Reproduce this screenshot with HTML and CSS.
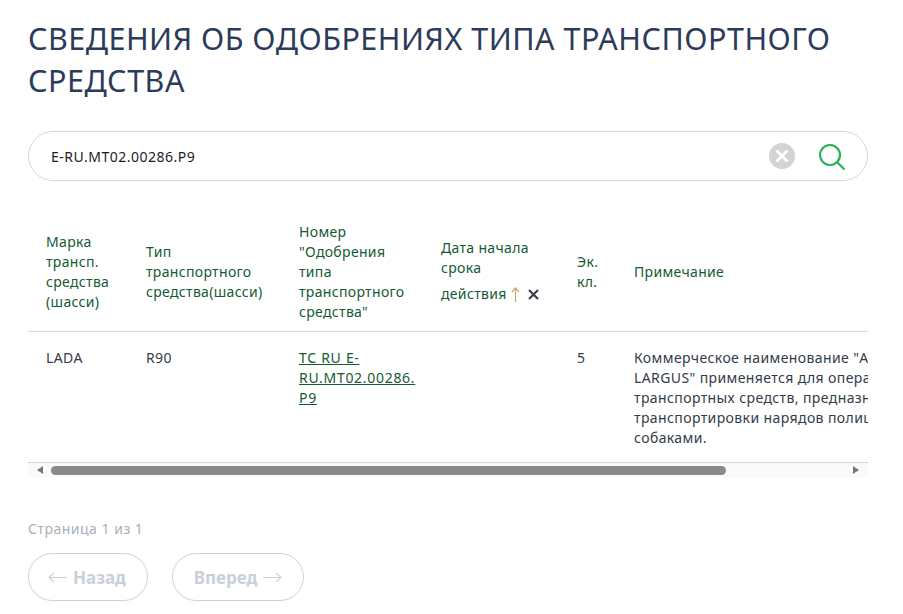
FILE: index.html
```html
<!DOCTYPE html>
<html lang="ru">
<head>
<meta charset="utf-8">
<title>Сведения об одобрениях типа транспортного средства</title>
<link rel="stylesheet" href="styles.css">
</head>
<body>
<main class="page">
  <h1 class="title">Сведения об одобрениях типа транспортного средства</h1>
  <form class="search">
    <span class="search-value">E-RU.MT02.00286.P9</span>
    <svg class="icon-clear" width="26" height="26" viewBox="0 0 26 26" aria-hidden="true">
      <circle cx="13" cy="13" r="13" fill="#d3d3d3"/>
      <path d="M7.5 7.5l11 11M18.5 7.5l-11 11" stroke="#fff" stroke-width="3" fill="none"/>
    </svg>
    <svg class="icon-search" width="26" height="26" viewBox="0 0 26 26" aria-hidden="true">
      <circle cx="11" cy="11" r="10" stroke="#2bb159" stroke-width="2.2" fill="none"/>
      <path d="M18 18l7.5 7.5" stroke="#2bb159" stroke-width="2.2" fill="none"/>
    </svg>
  </form>
  <section class="table-block">
    <div class="table-scroll">
      <table class="results">
        <colgroup>
          <col class="c1"><col class="c2"><col class="c3"><col class="c4"><col class="c5"><col class="c6">
        </colgroup>
        <thead>
          <tr>
            <th>Марка<br>трансп.<br>средства<br>(шасси)</th>
            <th>Тип<br>транспортного<br>средства(шасси)</th>
            <th>Номер<br>"Одобрения<br>типа<br>транспортного<br>средства"</th>
            <th>Дата начала<br>срока<br><span class="sort">действия<svg class="sort-arrow" width="9" height="15" viewBox="0 0 9 15" aria-hidden="true"><path d="M4.5 15V1M1 5l3.5-4L8 5" stroke="#c8a878" stroke-width="1.2" fill="none"/></svg><svg class="sort-x" width="11" height="11" viewBox="0 0 11 11" aria-hidden="true"><path d="M1 1l9 9M10 1L1 10" stroke="#3a3f4a" stroke-width="2.2" fill="none"/></svg></span></th>
            <th>Эк.<br>кл.</th>
            <th>Примечание</th>
          </tr>
        </thead>
        <tbody>
          <tr>
            <td>LADA</td>
            <td>R90</td>
            <td><a href="#">ТС RU E-<br>RU.MT02.00286.<br>P9</a></td>
            <td></td>
            <td>5</td>
            <td>Коммерческое наименование "ATLAS<br>LARGUS" применяется для оперативных<br>транспортных средств, предназначенных для<br>транспортировки нарядов полиции со служебными<br>собаками.</td>
          </tr>
        </tbody>
      </table>
    </div>
    <div class="scrollbar" aria-hidden="true">
      <span class="sb-arrow sb-left"></span>
      <span class="sb-thumb"></span>
      <span class="sb-arrow sb-right"></span>
    </div>
  </section>
  <p class="page-info">Страница 1 из 1</p>
  <nav class="pager">
    <a class="pager-btn prev"><svg width="19" height="11" viewBox="0 0 19 11" aria-hidden="true"><path d="M19 5.5H1M6 1L1 5.5 6 10" stroke="#ccd2dc" stroke-width="1.2" fill="none"/></svg>Назад</a>
    <a class="pager-btn next">Вперед<svg width="19" height="11" viewBox="0 0 19 11" aria-hidden="true"><path d="M0 5.5h18M13 1l5 4.5L13 10" stroke="#ccd2dc" stroke-width="1.2" fill="none"/></svg></a>
  </nav>
</main>
</body>
</html>
```
FILE: styles.css
```css
* { box-sizing: border-box; }
html, body { margin: 0; background: #fff; }
body { font-family: "Noto Sans", "Open Sans", sans-serif; color: #333b4a; overflow: hidden; height: 614px; }
.page { width: 840px; margin-left: 28px; padding-top: 17px; }
.title {
  margin: 0;
  font-size: 30.5px;
  line-height: 42px;
  font-weight: 400;
  letter-spacing: 0.49px;
  text-transform: uppercase;
  color: #2c3b5a;
}
.search {
  margin-top: 30px;
  height: 50px;
  border: 1px solid #d5d5d5;
  border-radius: 25px;
  display: flex;
  align-items: center;
  padding: 0 22px 0 22px;
}
.search-value { flex: 1; font-size: 14px; letter-spacing: 0.5px; color: #1c1c2a; }
.icon-clear { margin-right: 24px; }
.icon-search { margin-top: 1px; }
.table-block { margin-top: 30px; }
.table-scroll { overflow: hidden; }
.results {
  width: 988px;
  table-layout: fixed;
  border-collapse: collapse;
  font-size: 14px;
  line-height: 20px;
}
.c1 { width: 100px; }
.c2 { width: 153px; }
.c3 { width: 142px; }
.c4 { width: 136px; }
.c5 { width: 57px; }
.c6 { width: 400px; }
.results th {
  font-weight: 400;
  text-align: left;
  vertical-align: middle;
  padding: 11px 18px 9px;
  color: #145a32;
  letter-spacing: 0.33px;
  border-bottom: 1px solid #d5d5d5;
  white-space: nowrap;
}
.results td {
  vertical-align: top;
  padding: 16px 18px 14px;
  color: #333b4a;
  letter-spacing: 0.4px;
  border-bottom: 1px solid #d5d5d5;
  white-space: nowrap;
}
.results a { color: #145a32; text-decoration: underline; letter-spacing: 0.7px; }
.sort { display: inline-flex; align-items: center; padding: 6px 0 2px; }
.sort-arrow { margin-left: 4px; }
.sort-x { margin-left: 8px; }
.scrollbar {
  height: 14px;
  background: #fafafa;
  display: flex;
  align-items: center;
  padding: 0 9px;
}
.sb-arrow { width: 0; height: 0; border-top: 4.5px solid transparent; border-bottom: 4.5px solid transparent; }
.sb-left { border-right: 6px solid #777; }
.sb-right { border-left: 6px solid #777; margin-left: auto; }
.sb-thumb { width: 675px; height: 9px; margin-left: 8px; border-radius: 5px; background: #8a8a8a; }
.page-info {
  margin: 42px 0 0;
  font-size: 14px;
  line-height: 20px;
  letter-spacing: 0.5px;
  color: #a9afbb;
}
.pager { display: flex; gap: 24px; margin-top: 14px; }
.pager-btn {
  height: 48px;
  border: 1px solid #ccd2dc;
  border-radius: 24px;
  display: flex;
  align-items: center;
  justify-content: center;
  gap: 6px;
  font-size: 17px;
  font-weight: 700;
  color: #c9d0da;
}
.prev { width: 120px; padding-right: 2px; }
.next { width: 132px; }
```
